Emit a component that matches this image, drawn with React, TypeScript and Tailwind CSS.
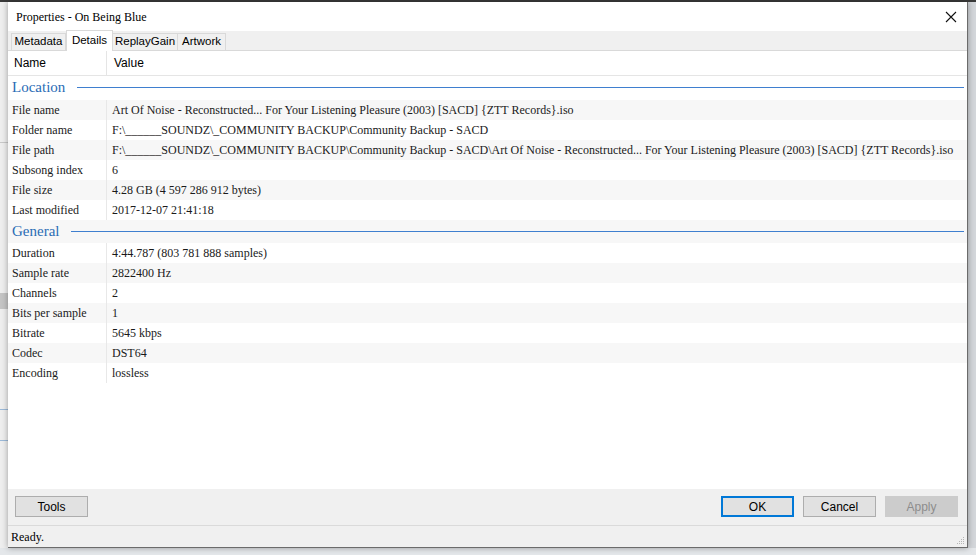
import React from "react";

type Row = { name: string; value: string };

const location: Row[] = [
  { name: "File name", value: "Art Of Noise - Reconstructed... For Your Listening Pleasure (2003) [SACD] {ZTT Records}.iso" },
  { name: "Folder name", value: "F:\\______SOUNDZ\\_COMMUNITY BACKUP\\Community Backup - SACD" },
  {
    name: "File path",
    value:
      "F:\\______SOUNDZ\\_COMMUNITY BACKUP\\Community Backup - SACD\\Art Of Noise - Reconstructed... For Your Listening Pleasure (2003) [SACD] {ZTT Records}.iso",
  },
  { name: "Subsong index", value: "6" },
  { name: "File size", value: "4.28 GB (4 597 286 912 bytes)" },
  { name: "Last modified", value: "2017-12-07 21:41:18" },
];

const general: Row[] = [
  { name: "Duration", value: "4:44.787 (803 781 888 samples)" },
  { name: "Sample rate", value: "2822400 Hz" },
  { name: "Channels", value: "2" },
  { name: "Bits per sample", value: "1" },
  { name: "Bitrate", value: "5645 kbps" },
  { name: "Codec", value: "DST64" },
  { name: "Encoding", value: "lossless" },
];

const tabs = [
  { label: "Metadata", w: "w-[55px]" },
  { label: "Details", w: "w-[47px]" },
  { label: "ReplayGain", w: "w-[65px]" },
  { label: "Artwork", w: "w-[48px]" },
];

const serif = "font-['Liberation_Serif',serif]";
const sans = "font-['Liberation_Sans','Noto_Sans',sans-serif]";

function GroupHeader({ title, shaded }: { title: string; shaded?: boolean }) {
  return (
    <div
      className={
        "flex items-center gap-3 pl-[4px] pr-[3px] " +
        (shaded ? "h-[23px] bg-[#f7f7f7]" : "h-[24px] pb-[2px]")
      }
    >
      <span className={serif + " text-[15px] leading-none text-[#2a6cb5]"}>{title}</span>
      <div className="h-px flex-1 bg-[#3f7fcf]" />
    </div>
  );
}

function DataRow({ row, shaded }: { row: Row; shaded: boolean }) {
  return (
    <div className={"flex h-[20px] items-center text-[12px] text-[#1a1a1a] " + serif + (shaded ? " bg-[#f7f7f7]" : "")}>
      <div className="h-full w-[99px] shrink-0 border-r border-[#e8e8e8] pl-[4px] leading-[20px]">{row.name}</div>
      <div className="whitespace-nowrap pl-[5px] leading-[20px]">{row.value}</div>
    </div>
  );
}

function Btn({ label, primary, disabled }: { label: string; primary?: boolean; disabled?: boolean }) {
  return (
    <button
      className={
        sans +
        " flex h-[21px] w-[73px] items-center justify-center text-[12px] " +
        (primary
          ? "border-2 border-[#0078d7] bg-[#e1e1e1] text-black"
          : disabled
          ? "border border-[#cccccc] bg-[#cccccc] text-[#8c8c8c]"
          : "border border-[#adadad] bg-[#e1e1e1] text-black")
      }
    >
      {label}
    </button>
  );
}

export default function App() {
  return (
    <div className="relative h-[555px] w-[976px] overflow-hidden bg-[#d3d6da]">
      {/* desktop behind */}
      <div className="h-[2px] w-full bg-[#3a3a3a]" />
      <div className="flex h-full w-[8px] flex-col bg-[#eeeeee]">
        <div className="mt-[140px] h-px bg-[#c8c8c8]" />
        <div className="mt-[150px] h-[16px] bg-[#c4c4c4]" />
        <div className="mt-[100px] h-px bg-[#9bb9d8]" />
        <div className="mt-[30px] h-px bg-[#9bb9d8]" />
      </div>
      <div className="absolute bottom-0 left-0 right-0 h-[7px] bg-[#e4e7ea]" />

      {/* dialog window */}
      <div className="absolute left-[8px] top-[2px] flex h-[546px] w-[960px] flex-col border-r border-b border-[#6b6b6b] bg-white shadow-[0_0_6px_rgba(0,0,0,0.35)]">
        {/* title bar */}
        <div className="flex h-[29px] shrink-0 items-center justify-between bg-white pl-[8px] pr-[8px]">
          <span className={serif + " text-[12px] text-black"}>Properties - On Being Blue</span>
          <svg width="12" height="12" viewBox="0 0 12 12" className="mr-[2px]">
            <path d="M1 1 L11 11 M11 1 L1 11" stroke="#111" strokeWidth="1.1" />
          </svg>
        </div>

        {/* tabs */}
        <div className="flex h-[20px] shrink-0 items-end border-b border-[#d9d9d9] bg-[#f0f0f0] pl-[3px]">
          {tabs.map((t, i) => {
            const sel = t.label === "Details";
            return (
              <div
                key={t.label}
                className={
                  sans +
                  " -mb-px flex items-center justify-center whitespace-nowrap text-[11.5px] text-black " +
                  t.w +
                  " " +
                  (sel
                    ? "h-[21px] border border-b-0 border-[#d9d9d9] bg-white"
                    : "h-[18px] border border-[#d9d9d9] bg-[#f0f0f0] " + (i === 0 ? "" : "border-l-0"))
                }
              >
                {t.label}
              </div>
            );
          })}
        </div>

        {/* list */}
        <div className="flex flex-1 flex-col bg-white">
          <div className={sans + " flex h-[25px] items-center border-b border-[#e5e5e5] text-[12px] text-black"}>
            <div className="flex h-full w-[99px] items-center border-r border-[#e5e5e5] pl-[6px]">Name</div>
            <div className="pl-[7px]">Value</div>
          </div>
          <GroupHeader title="Location" />
          {location.map((r, i) => (
            <DataRow key={r.name} row={r} shaded={i % 2 === 0} />
          ))}
          <GroupHeader title="General" shaded />
          {general.map((r, i) => (
            <DataRow key={r.name} row={r} shaded={i % 2 === 1} />
          ))}
        </div>

        {/* buttons */}
        <div className="flex h-[36px] shrink-0 items-start justify-between bg-[#f0f0f0] px-[7px] pt-[7px] pr-[9px]">
          <Btn label="Tools" />
          <div className="flex gap-[9px]">
            <Btn label="OK" primary />
            <Btn label="Cancel" />
            <Btn label="Apply" disabled />
          </div>
        </div>

        {/* status */}
        <div className="relative flex h-[22px] shrink-0 items-center border-t border-[#dadada] bg-[#f0f0f0] pl-[3px]">
          <span className={serif + " text-[12px] text-black"}>Ready.</span>
          <svg width="8" height="8" viewBox="0 0 8 8" className="absolute bottom-[2px] right-[2px]">
            <g fill="#b5b5b5">
              <rect x="6" y="0" width="1" height="1" />
              <rect x="4" y="2" width="1" height="1" />
              <rect x="6" y="2" width="1" height="1" />
              <rect x="2" y="4" width="1" height="1" />
              <rect x="4" y="4" width="1" height="1" />
              <rect x="6" y="4" width="1" height="1" />
              <rect x="0" y="6" width="1" height="1" />
              <rect x="2" y="6" width="1" height="1" />
              <rect x="4" y="6" width="1" height="1" />
              <rect x="6" y="6" width="1" height="1" />
            </g>
          </svg>
        </div>
      </div>
    </div>
  );
}
